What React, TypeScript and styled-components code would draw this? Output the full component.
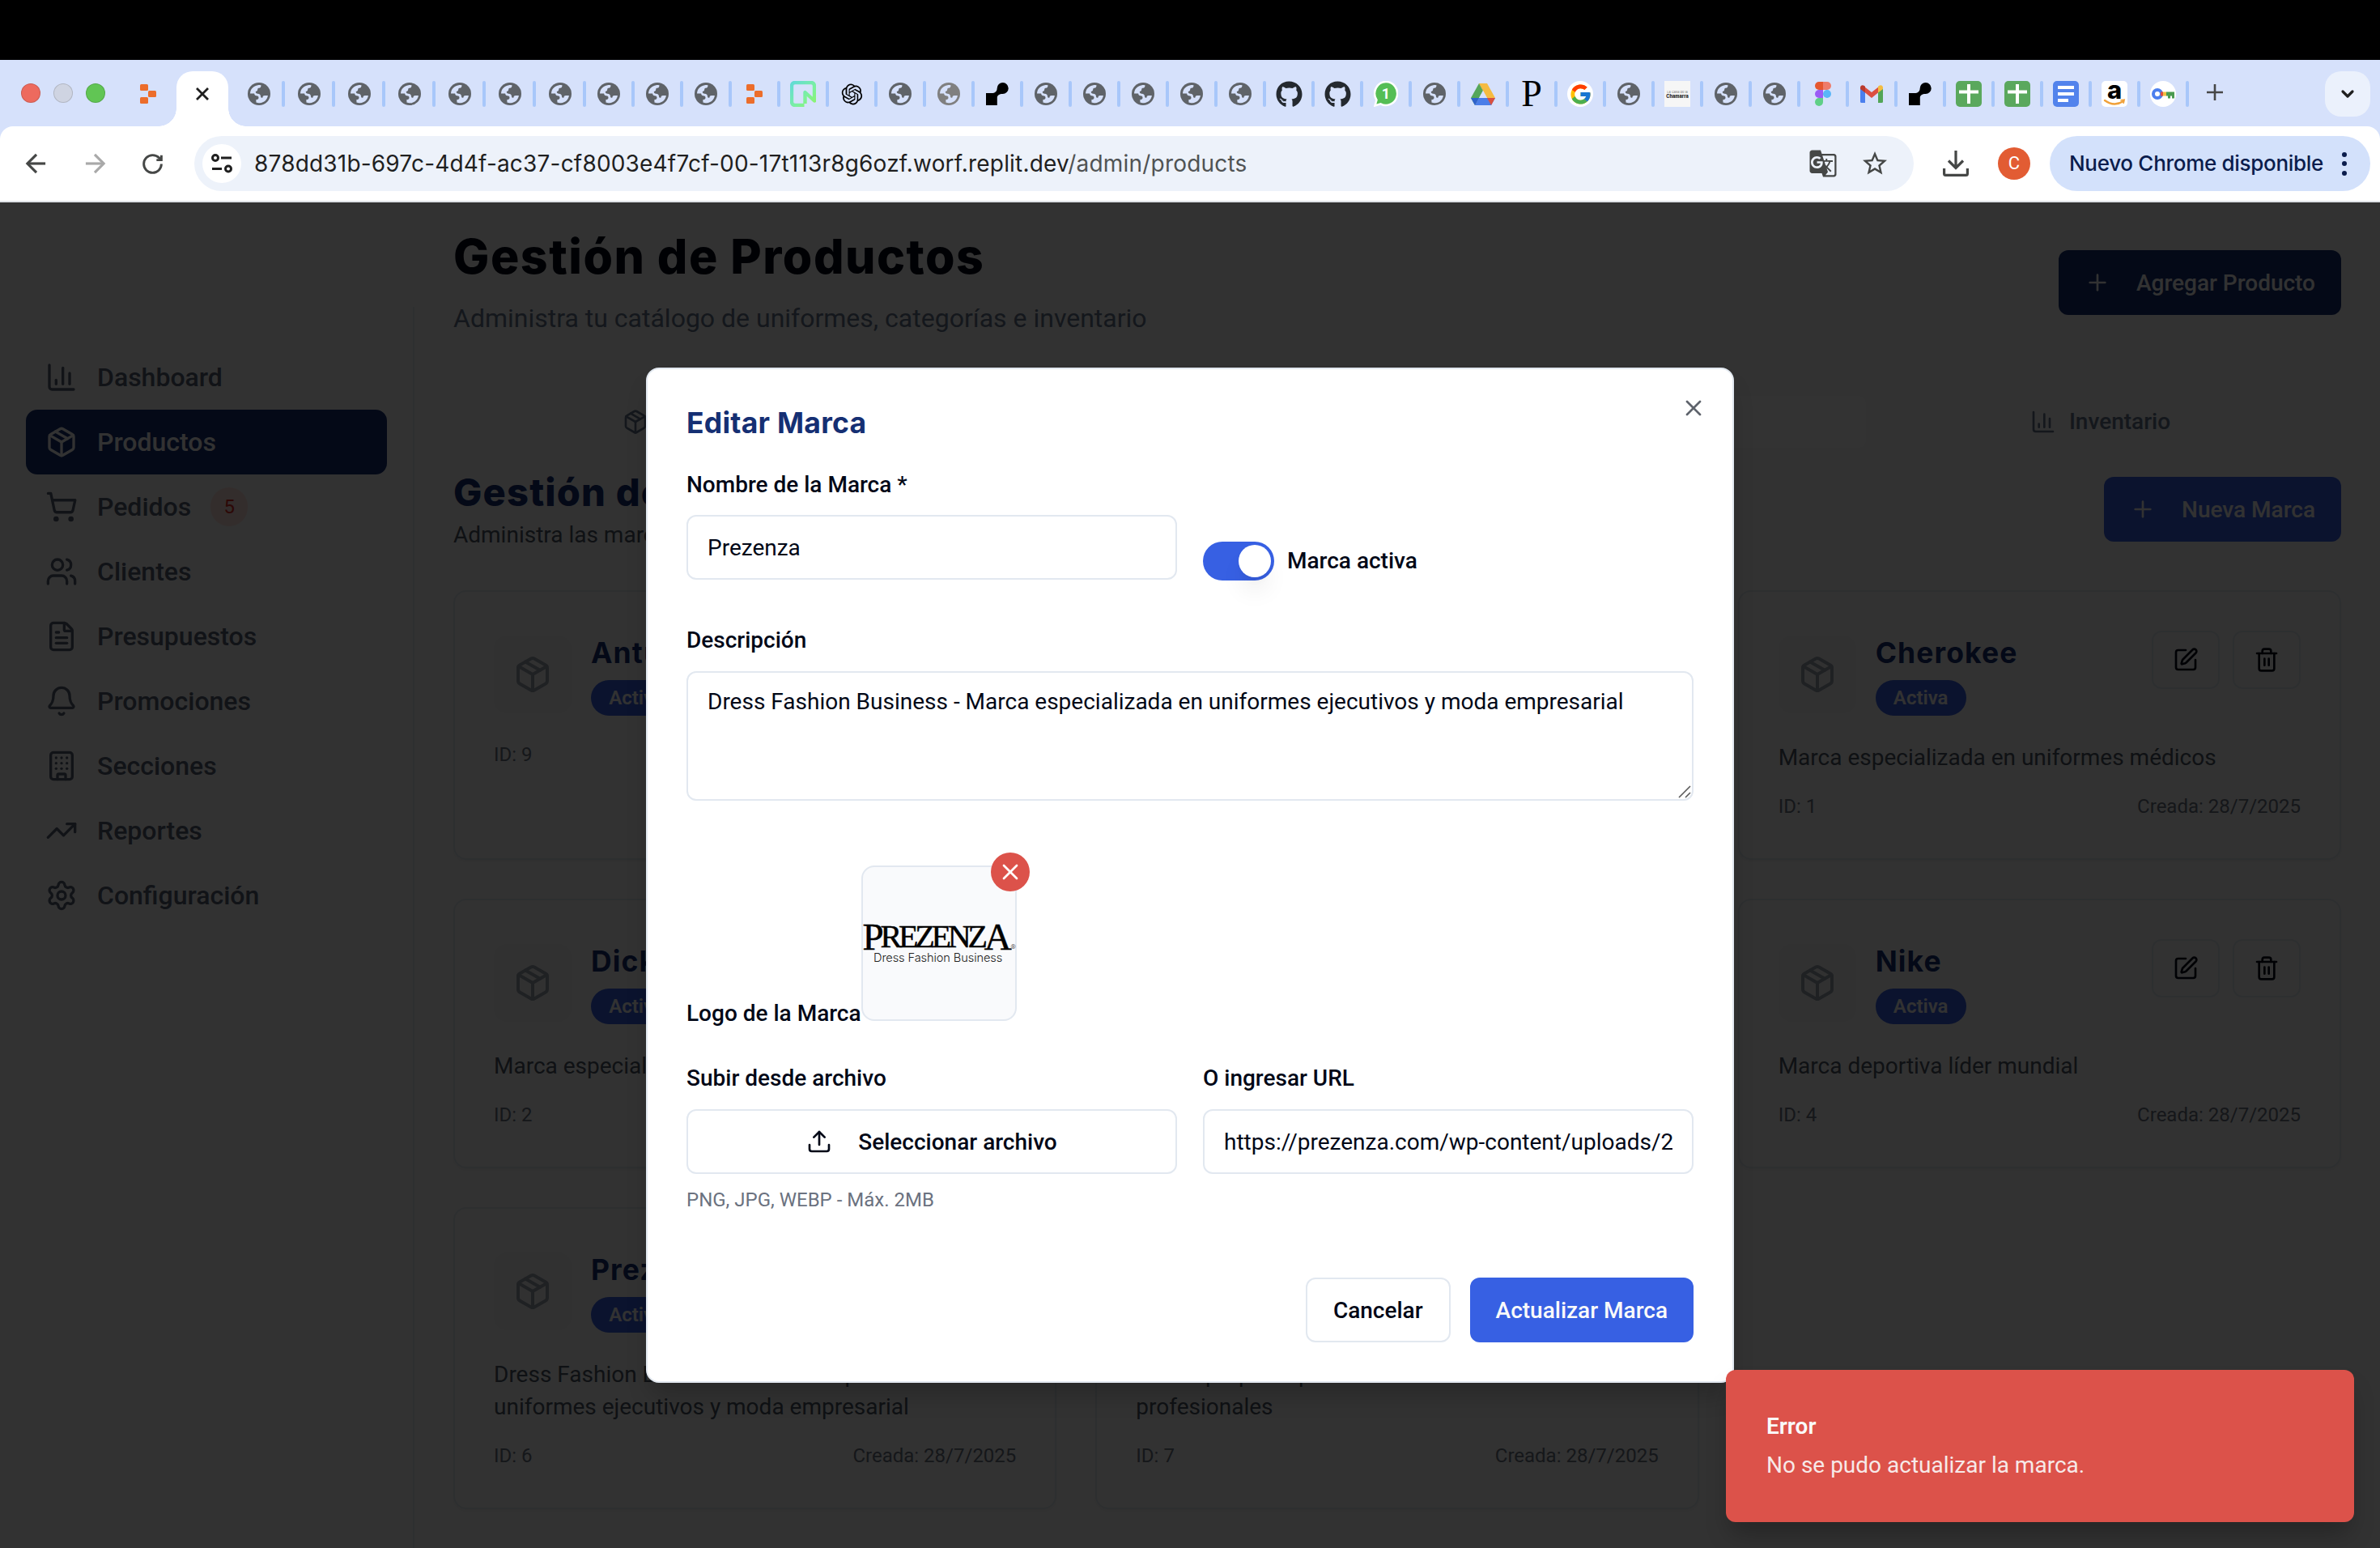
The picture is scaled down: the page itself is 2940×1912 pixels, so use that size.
import React from 'react';
import styled, { createGlobalStyle, css } from 'styled-components';
import {
  ChartColumn, Package, ShoppingCart, Users, FileText, Bell, Building, TrendingUp, Settings,
  Plus, SquarePen, Trash2, X, Upload, RotateCw, ArrowLeft, ArrowRight, ChevronDown,
} from 'lucide-react';
import { FaGithub } from 'react-icons/fa';
import { FcGoogle } from 'react-icons/fc';
import { RiOpenaiFill } from 'react-icons/ri';
import { MdGTranslate, MdStarOutline } from 'react-icons/md';

const body = 'Roboto, "Liberation Sans", sans-serif';
const display = 'Inter, "Open Sans", sans-serif';
const navy = '#152f73';
const blue = '#3760e3';
const ink = '#020817';
const line = '#e2e8f0';

const GlobalStyle = createGlobalStyle`
  * { box-sizing: border-box; }
  body { margin: 0; background: #000; font-family: ${body}; color: ${ink}; }
  h1, h2, h3, p { margin: 0; }
  button, input, textarea { font-family: inherit; margin: 0; }
  svg { display: block; flex: none; }
`;

const Screen = styled.div`
  width: 2940px;
  height: 1912px;
  padding-top: 74px;
  background: #000;
  display: flex;
  flex-direction: column;
  overflow: hidden;
`;

/* ---------- browser chrome ---------- */

const TabStrip = styled.div`
  height: 82px;
  flex: none;
  background: #d6e1fb;
  display: flex;
  align-items: flex-end;
  padding: 0 12px 0 26px;
`;
const Lights = styled.div`
  height: 82px;
  display: flex;
  align-items: center;
  gap: 16px;
  margin-right: 23px;
`;
const Light = styled.i<{ $color: string }>`
  width: 24px;
  height: 24px;
  border-radius: 50%;
  background: ${p => p.$color};
  border: 1px solid rgba(0, 0, 0, 0.14);
`;
const PinnedTab = styled.div`
  width: 60px;
  height: 80px;
  display: grid;
  place-items: center;
`;
const ActiveTab = styled.div`
  position: relative;
  width: 64px;
  height: 68px;
  margin: 0 8px 0 5px;
  padding-bottom: 12px;
  background: #fff;
  border-radius: 20px 20px 0 0;
  display: grid;
  place-items: center;
  color: #1f1f1f;
  &::before, &::after {
    content: '';
    position: absolute;
    bottom: 0;
    width: 22px;
    height: 22px;
  }
  &::before { right: 100%; background: radial-gradient(circle at 0 0, transparent 21.5px, #fff 22px); }
  &::after { left: 100%; background: radial-gradient(circle at 100% 0, transparent 21.5px, #fff 22px); }
`;
const Tab = styled.div<{ $wide?: boolean }>`
  width: ${p => (p.$wide ? 62 : 60)}px;
  height: 80px;
  padding-left: ${p => (p.$wide ? 2 : 0)}px;
  display: flex;
  align-items: center;
`;
const TabIcon = styled.div`
  width: 56px;
  display: grid;
  place-items: center;
`;
const TabDivider = styled.i`
  width: 4px;
  height: 32px;
  border-radius: 2px;
  background: #a8c7fa;
`;
const NewTab = styled.div`
  width: 64px;
  height: 80px;
  padding-bottom: 4px;
  display: grid;
  place-items: center;
  color: #474747;
`;
const TabSearch = styled.div`
  width: 56px;
  height: 56px;
  margin: 0 0 12px auto;
  border-radius: 20px;
  background: #ebf1fc;
  display: grid;
  place-items: center;
  color: #1f1f1f;
`;
const FavTile = styled.div<{ $bg: string; $round?: boolean }>`
  width: 32px;
  height: 32px;
  background: ${p => p.$bg};
  border-radius: ${p => (p.$round ? '50%' : '5px')};
  display: grid;
  place-items: center;
`;
const SerifFav = styled.span`
  font: 46px/32px "Liberation Serif", serif;
  color: #000;
`;
const ChamarraFav = styled.div`
  width: 32px;
  height: 32px;
  background: #f6f6f6;
  display: flex;
  flex-direction: column;
  align-items: center;
  justify-content: center;
  font: 4px/5px ${display};
  color: #777;
  b { font: 800 5.6px/6px ${display}; color: #222; }
`;

const ToolbarBack = styled.div`
  flex: none;
  height: 94px;
  background: #d6e1fb;
`;
const Toolbar = styled.div`
  height: 94px;
  background: #fff;
  border-radius: 16px 16px 0 0;
  border-bottom: 2px solid #dfe2e6;
  display: flex;
  align-items: center;
  padding: 0 12px 0 26px;
`;
const NavIcon = styled.div<{ $dim?: boolean }>`
  width: 36px;
  margin-right: 36px;
  display: grid;
  place-items: center;
  color: ${p => (p.$dim ? '#a9a9a9' : '#454746')};
`;
const Omnibox = styled.div`
  width: 2124px;
  height: 68px;
  margin-left: -2px;
  border-radius: 34px;
  background: #edf2fa;
  display: flex;
  align-items: center;
  padding: 0 30px 0 10px;
`;
const SiteInfo = styled.div`
  width: 48px;
  height: 48px;
  border-radius: 50%;
  background: #fff;
  display: grid;
  place-items: center;
  margin-right: 16px;
`;
const Url = styled.div`
  font: 28px/40px ${display};
  letter-spacing: 0.19px;
  color: #1f1f1f;
  span { color: #505354; }
`;
const OmniActions = styled.div`
  margin-left: auto;
  display: flex;
  align-items: center;
  gap: 28px;
  color: #454746;
`;
const ToolAction = styled.div`
  width: 40px;
  margin-left: 32px;
  display: grid;
  place-items: center;
  color: #454746;
`;
const Avatar = styled.div`
  width: 40px;
  height: 40px;
  margin-left: 32px;
  border-radius: 50%;
  background: #e25c33;
  color: #fff;
  font: 22px/40px ${body};
  text-align: center;
`;
const UpdatePill = styled.div`
  height: 68px;
  width: 396px;
  margin-left: auto;
  padding: 0 29px 0 24px;
  border-radius: 34px;
  background: #d3e1fb;
  display: flex;
  align-items: center;
  justify-content: space-between;
  color: #0a1c4c;
  font: 500 26px/40px ${display};
  letter-spacing: -0.3px;
  white-space: nowrap;
`;
const Dots = styled.div`
  display: flex;
  flex-direction: column;
  gap: 5.5px;
  i { width: 6px; height: 6px; border-radius: 50%; background: #0a1c4c; }
`;

/* ---------- page ---------- */

const Page = styled.div`
  position: relative;
  flex: 1;
  min-height: 0;
  display: flex;
  background: #fafafa;
  overflow: hidden;
`;
const Sidebar = styled.aside`
  width: 512px;
  flex: none;
  margin-top: 129px;
  border-right: 2px solid ${line};
  padding: 47px 32px;
`;
const NavItem = styled.div<{ $active?: boolean }>`
  height: 80px;
  padding: 0 24px;
  border-radius: 14px;
  display: flex;
  align-items: center;
  gap: 24px;
  font: 500 32px/48px ${body};
  color: ${p => (p.$active ? '#fafafa' : '#566074')};
  background: ${p => (p.$active ? navy : 'transparent')};
`;
const Count = styled.span`
  width: 46px;
  height: 48px;
  border-radius: 24px;
  background: #fde0dc;
  color: #e02a1e;
  font: 24px/48px ${body};
  text-align: center;
`;
const Main = styled.main`
  flex: 1;
  min-width: 0;
  padding: 31px 48px;
`;
const SplitRow = styled.div`
  display: flex;
  align-items: center;
  justify-content: space-between;
`;
const PageTitle = styled.h1`
  font: 800 59px/72px ${display};
  letter-spacing: 1.5px;
  color: ${ink};
`;
const PageSubtitle = styled.p`
  margin-top: 16px;
  font: 32px/48px ${body};
  color: #64748b;
`;
const SectionTitle = styled.h2`
  margin-bottom: 2px;
  font: 800 47px/62px ${display};
  letter-spacing: 1.2px;
  color: ${navy};
`;
const SectionText = styled.p`
  font: 28px/40px ${body};
  color: #4b5563;
`;
const PrimaryButton = styled.button<{ $bg: string }>`
  height: 80px;
  padding: 0 32px;
  border: 0;
  border-radius: 12px;
  background: ${p => p.$bg};
  color: #fafafa;
  display: flex;
  align-items: center;
  gap: 32px;
  font-size: 28px;
  font-weight: 500;
`;
const Tabs = styled.div`
  margin: 64px 0 16px;
  height: 80px;
  padding: 8px;
  border-radius: 12px;
  background: #f7f8f9;
  display: grid;
  grid-template-columns: repeat(4, 1fr);
`;
const TabButton = styled.div<{ $active?: boolean }>`
  display: flex;
  align-items: center;
  justify-content: center;
  gap: 16px;
  border-radius: 8px;
  font: 500 28px/40px ${body};
  color: #64748b;
  ${p => p.$active && css`background: #fcfcfc; color: ${ink};`}
`;
const Cards = styled.div`
  margin-top: 48px;
  display: grid;
  grid-template-columns: repeat(3, 1fr);
  gap: 48px;
`;
const Card = styled.article`
  border: 2px solid ${line};
  border-radius: 16px;
  padding: 48px;
  box-shadow: 0 2px 4px rgba(0, 0, 0, 0.05);
`;
const CardHead = styled.div`
  height: 107px;
  display: flex;
  align-items: center;
  margin-bottom: 30px;
`;
const Thumb = styled.div`
  width: 96px;
  height: 96px;
  margin-right: 24px;
  border-radius: 16px;
  background: #f3f4f5;
  color: #9ca3af;
  display: grid;
  place-items: center;
`;
const CardTitle = styled.h3`
  margin-bottom: 6px;
  font: 700 35.5px/55px ${display};
  letter-spacing: 1.1px;
  color: ${navy};
`;
const Pill = styled.span`
  display: block;
  width: 112px;
  height: 44px;
  margin-bottom: 2px;
  border-radius: 22px;
  background: ${blue};
  color: #fafafa;
  font: 600 24px/44px ${body};
  text-align: center;
`;
const CardActions = styled.div`
  margin-left: auto;
  align-self: flex-start;
  display: flex;
  gap: 16px;
`;
const IconButton = styled.button`
  width: 84px;
  height: 72px;
  padding: 0;
  border: 2px solid ${line};
  border-radius: 12px;
  background: transparent;
  color: ${ink};
  display: grid;
  place-items: center;
`;
const CardText = styled.p`
  margin-bottom: 24px;
  font: 28px/40px ${body};
  color: #4b5563;
`;
const CardMeta = styled.div`
  display: flex;
  justify-content: space-between;
  font: 24px/32px ${body};
  color: #6b7280;
`;

/* ---------- dialog ---------- */

const Overlay = styled.div`
  position: absolute;
  inset: 0;
  background: rgba(0, 0, 0, 0.8);
  display: grid;
  place-items: center;
`;
const Dialog = styled.section`
  position: relative;
  width: 1344px;
  height: 1254px;
  padding: 48px;
  border: 2px solid ${line};
  border-radius: 16px;
  background: #fff;
  box-shadow: 0 20px 30px -6px rgba(0, 0, 0, 0.2);
`;
const DialogTitle = styled.h2`
  padding-top: 1px;
  font: 700 35.5px/36px ${display};
  letter-spacing: 0.25px;
  color: ${navy};
`;
const CloseButton = styled.div`
  position: absolute;
  top: 32px;
  right: 32px;
  color: #5e636c;
`;
const FormRow = styled.div<{ $top: number }>`
  margin-top: ${p => p.$top}px;
  display: grid;
  grid-template-columns: 1fr 1fr;
  gap: 32px;
`;
const Field = styled.div<{ $top?: number }>`
  margin-top: ${p => p.$top ?? 0}px;
  display: flex;
  flex-direction: column;
`;
const Label = styled.label`
  font: 500 28px/28px ${body};
  color: ${ink};
  white-space: nowrap;
`;
const inputBox = css`
  margin-top: 24px;
  width: 100%;
  border: 2px solid ${line};
  border-radius: 12px;
  background: #fff;
  color: ${ink};
  font-size: 28px;
  line-height: 40px;
  outline: none;
`;
const Input = styled.input`
  ${inputBox}
  height: 80px;
  padding: 0 24px;
`;
const NameInput = styled(Input)`
  margin-top: 23px;
  padding-top: 1px;
`;
const TextArea = styled.textarea`
  ${inputBox}
  height: 160px;
  padding: 16px 24px;
  resize: none;
`;
const AreaWrap = styled.div`
  position: relative;
  display: flex;
`;
const Grip = styled.svg`
  position: absolute;
  right: 3px;
  bottom: 3px;
`;
const SwitchRow = styled.div`
  align-self: end;
  height: 48px;
  margin-bottom: -1px;
  display: flex;
  align-items: center;
  gap: 16px;
`;
const Switch = styled.div`
  width: 88px;
  height: 48px;
  padding: 4px;
  border-radius: 24px;
  background: ${blue};
  display: flex;
  justify-content: flex-end;
  i {
    width: 40px;
    height: 40px;
    border-radius: 50%;
    background: #fff;
    box-shadow: 0 20px 30px -6px rgba(0, 0, 0, 0.1), 0 8px 12px -8px rgba(0, 0, 0, 0.1);
  }
`;
const LogoRow = styled.div`
  margin-top: 80px;
  display: flex;
  align-items: flex-end;
`;
const LogoBox = styled.div`
  position: relative;
  width: 192px;
  height: 192px;
  margin-bottom: 5px;
  border: 2px solid ${line};
  border-radius: 16px;
  background: #f9fafc;
  display: flex;
  flex-direction: column;
  align-items: center;
  justify-content: center;
  white-space: nowrap;
`;
const Wordmark = styled.div`
  width: 100%;
  height: 35px;
  margin-top: 5px;
  display: flex;
  font: 40px/36px "Liberation Serif", serif;
  letter-spacing: -4.2px;
  color: #000;
  -webkit-text-stroke: 0.5px #000;
  big { font-size: 47px; }
  small { font: 8px/8px ${body}; letter-spacing: 0; align-self: flex-end; color: #555; -webkit-text-stroke: 0; margin-left: 3px; }
`;
const Tagline = styled.div`
  height: 22px;
  padding-right: 2px;
  font: 300 14.6px/19px ${display};
  letter-spacing: -0.1px;
  color: #222;
`;
const RemoveLogo = styled.div`
  position: absolute;
  top: -18px;
  right: -18px;
  width: 48px;
  height: 48px;
  border-radius: 50%;
  background: #dc524a;
  color: #fff;
  display: grid;
  place-items: center;
`;
const OutlineButton = styled.button<{ $top?: number }>`
  height: 80px;
  margin-top: ${p => p.$top ?? 0}px;
  padding: 0 32px;
  border: 2px solid ${line};
  border-radius: 12px;
  background: #fff;
  color: ${ink};
  display: flex;
  align-items: center;
  justify-content: center;
  gap: 32px;
  font-size: 28px;
  font-weight: 500;
`;
const Hint = styled.p`
  margin-top: 16px;
  font: 24px/32px ${body};
  color: #6b7280;
`;
const Footer = styled.div`
  margin-top: 80px;
  display: flex;
  justify-content: flex-end;
  gap: 24px;
`;
const Toast = styled.div`
  position: absolute;
  right: 32px;
  bottom: 32px;
  width: 776px;
  height: 188px;
  padding: 50px;
  border-radius: 12px;
  background: #dc524a;
  box-shadow: 0 20px 30px -6px rgba(0, 0, 0, 0.25);
  color: #fafafa;
  font: 28px/40px ${body};
  b { display: block; font-weight: 600; margin-bottom: 8px; }
  span { opacity: 0.9; }
`;

/* ---------- favicons ---------- */

const Globe = ({ color = '#5f6368' }: { color?: string }) => (
  <svg width="28" height="28" viewBox="0 0 28 28">
    <circle cx="14" cy="14" r="14" fill={color} />
    <path fill="#d6e1fb" d="M3 13.600C3.200 8 7 4 12.600 3.200c1.600-.2 3 0 4 .3-.2 2-1.200 3.300-2.600 3.300-1.200 0-1.800.6-1.800 1.800 0 1.500-1 2.200-2.400 2.400 0 1.800.8 2.800 2.600 2.800 2.400 0 3.600 1.300 3.600 3.200 0 1.600 1.100 2 2.300 1.700.3-1.900 1.200-2.600 2.600-2.600h4c-.6 5-4.800 9-9.900 9.100-2.100 0-3.600-.4-4.600-.8V21c1.900 0 3.100-.7 3.100-2.300 0-1.700-1.200-2.400-2.800-2.400-1.500 0-2.300-1-2.600-2.700z" />
  </svg>
);
const Replit = () => (
  <svg width="20" height="24" viewBox="0 0 20 24" fill="#ec6d2b">
    <rect width="10" height="8" rx="1.5" /><rect x="10" y="8" width="10" height="8" rx="1.5" /><rect y="16" width="10" height="8" rx="1.5" />
  </svg>
);
const Neon = () => (
  <svg width="32" height="32" viewBox="0 0 32 32">
    <defs><linearGradient id="neon" x1="0" y1="0" x2="1" y2="1"><stop offset="0" stopColor="#62dbd6" /><stop offset="0.6" stopColor="#7bf0a0" /><stop offset="1" stopColor="#8df56a" /></linearGradient></defs>
    <path d="M17.500 30H6a4 4 0 0 1-4-4V6a4 4 0 0 1 4-4h20a4 4 0 0 1 4 4v18.500L18.500 14v14" fill="none" stroke="url(#neon)" strokeWidth="4.4" strokeLinejoin="round" />
  </svg>
);
const Keyhole = () => (
  <svg width="28" height="28" viewBox="0 0 28 28"><path d="M0 13h7c4 0 6.500-2 6.700-6A7 7 0 1 1 20.500 14c-4 0-6.700 1.500-6.700 5v9H0z" fill="#000" /></svg>
);
const WhatsApp = () => (
  <svg width="30" height="32" viewBox="0 0 30 32">
    <path d="M15 1a14 14.500 0 1 1-6.500 27.300L1.500 30.500l2-7A14 14.500 0 0 1 15 1z" fill="#55be55" stroke="#fff" strokeWidth="2.5" />
    <text x="15" y="22" textAnchor="middle" fontFamily={body} fontWeight="700" fontSize="18" fill="#fff">1</text>
  </svg>
);
const Drive = () => (
  <svg width="30" height="27" viewBox="0 0 30 27">
    <path d="M10 0h10l-5 9z" fill="#3a8d4b" /><path d="M10 0 0 18l5 9L15 9z" fill="#55a65a" />
    <path d="M20 0H10l10 18h10z" fill="#f5bb41" /><path d="M10 18 5 27h20l5-9z" fill="#4a7de8" />
    <path d="M20 18h10l-5 9z" fill="#d9503f" /><path d="M0 18h10l-5 9z" fill="#2f62cc" /><path d="M10.200 17.800 15 9l4.800 8.800z" fill="#d6e1fb" />
  </svg>
);
const Figma = () => (
  <svg width="20" height="30" viewBox="0 0 20 30">
    <path d="M5 0h5v10H5A5 5 0 0 1 5 0z" fill="#e5572f" /><path d="M10 0h5a5 5 0 0 1 0 10h-5z" fill="#ee7c6b" />
    <path d="M5 10h5v10H5a5 5 0 0 1 0-10z" fill="#9b5cf5" /><circle cx="15" cy="15" r="5" fill="#59b6f8" /><path d="M5 20h5v5a5 5 0 1 1-5-5z" fill="#5fcf87" />
  </svg>
);
const Gmail = () => (
  <svg width="28" height="22" viewBox="0 0 28 22">
    <path d="M0 3v17.500A1.500 1.500 0 0 0 1.500 22H6V8z" fill="#4b7fee" /><path d="M28 3v17.500a1.500 1.500 0 0 1-1.500 1.500H22V8z" fill="#52a557" />
    <path d="M6 2.800 14 9l8-6.200V9.500L14 16 6 9.500z" fill="#dc4f41" /><path d="M0 3.200C0 .5 3-.8 5 1l1 .8v7.700L0 5z" fill="#b93a2f" /><path d="M28 3.200C28 .5 25-.8 23 1l-1 .8v7.700L28 5z" fill="#f3bc42" />
  </svg>
);
const Sheets = () => (
  <FavTile $bg="#5aa85d"><svg width="24" height="24" viewBox="0 0 24 24" fill="#fff"><rect y="7.5" width="24" height="4" /><rect x="10" width="4" height="24" /></svg></FavTile>
);
const Docs = () => (
  <FavTile $bg="#5283ec"><svg width="20" height="20" viewBox="0 0 20 20" fill="#fff"><rect width="20" height="4" /><rect y="8" width="20" height="4" /><rect y="16" width="13" height="4" /></svg></FavTile>
);
const GoogleFav = () => <FavTile $bg="#fff" $round><FcGoogle size={29} /></FavTile>;
const AmazonFav = () => (
  <FavTile $bg="#fff">
    <svg width="32" height="32" viewBox="0 0 32 32" overflow="visible">
      <text x="16" y="22" textAnchor="middle" fontFamily="Inter, sans-serif" fontWeight="800" fontSize="31" fill="#000">a</text>
      <path d="M4 24c7.500 5.500 16 5.500 23 1" fill="none" stroke="#f0a13a" strokeWidth="2.4" strokeLinecap="round" /><path d="M23.500 23.800l4.500-.6-1 4.500" fill="none" stroke="#f0a13a" strokeWidth="1.8" />
    </svg>
  </FavTile>
);
const KeyFav = () => (
  <FavTile $bg="#fff" $round>
    <svg width="28" height="16" viewBox="0 0 28 16">
      <circle cx="7" cy="8" r="5" fill="none" stroke="#4b7fee" strokeWidth="4" />
      <path d="M13 5.500h5v5h-5z" fill="#f3bc42" /><path d="M11 5.500h3v5h-3z" fill="#dc4f41" /><path d="M18 5.500h10v8h-3v-3h-2v3h-3v-3h-2z" fill="#4a9b50" />
    </svg>
  </FavTile>
);
const Chamarra = () => <ChamarraFav><span>La Casa de la</span><b>Chamarra</b></ChamarraFav>;
const Github = () => <FaGithub size={33} color="#24292f" />;
const OpenAI = () => <RiOpenaiFill size={31} color="#000" />;

const g = <Globe />;
const tabIcons = [
  g, g, g, g, g, g, g, g, g, g, <Replit />, <Neon />, <OpenAI />, g, <Globe color="#808080" />, <Keyhole />,
  g, g, g, g, g, <Github />, <Github />, <WhatsApp />, g, <Drive />, <SerifFav>P</SerifFav>, <GoogleFav />, g, <Chamarra />,
  g, g, <Figma />, <Gmail />, <Keyhole />, <Sheets />, <Sheets />, <Docs />, <AmazonFav />, <KeyFav />,
];

function Browser() {
  return (
    <>
      <TabStrip>
        <Lights><Light $color="#ed6a5e" /><Light $color="#cfd4e2" /><Light $color="#61c554" /></Lights>
        <PinnedTab><Replit /></PinnedTab>
        <ActiveTab>
          <svg width="16" height="16" viewBox="0 0 16 16" stroke="currentColor" strokeWidth="2.8"><path d="M1 1l14 14M15 1 1 15" /></svg>
        </ActiveTab>
        {tabIcons.map((icon, i) => (
          <Tab key={i} $wide={i < 7}><TabIcon>{icon}</TabIcon><TabDivider /></Tab>
        ))}
        <NewTab><svg width="20" height="20" viewBox="0 0 20 20" stroke="currentColor" strokeWidth="2.6"><path d="M10 0v20M0 10h20" /></svg></NewTab>
        <TabSearch><ChevronDown size={24} strokeWidth={3.2} /></TabSearch>
      </TabStrip>
      <ToolbarBack>
        <Toolbar>
          <NavIcon><ArrowLeft size={38} strokeWidth={2} strokeLinecap="butt" strokeLinejoin="miter" /></NavIcon>
          <NavIcon $dim><ArrowRight size={38} strokeWidth={2} strokeLinecap="butt" strokeLinejoin="miter" /></NavIcon>
          <NavIcon><RotateCw size={29} strokeWidth={2.4} strokeLinecap="butt" strokeLinejoin="miter" /></NavIcon>
          <Omnibox>
            <SiteInfo>
              <svg width="26" height="24" viewBox="0 0 26 24" fill="none" stroke="#1f1f1f" strokeWidth="3">
                <circle cx="5" cy="5" r="3.5" /><path d="M12 5h13M1 18.500h12" /><circle cx="21" cy="18.5" r="3.5" />
              </svg>
            </SiteInfo>
            <Url>878dd31b-697c-4d4f-ac37-cf8003e4f7cf-00-17t113r8g6ozf.worf.replit.dev<span>/admin/products</span></Url>
            <OmniActions><MdGTranslate size={36} /><MdStarOutline size={36} /></OmniActions>
          </Omnibox>
          <ToolAction>
            <svg width="32" height="32" viewBox="0 0 32 32" fill="none" stroke="currentColor" strokeWidth="3.2"><path d="M16 0v21M7 12.500l9 9 9-9M1.600 22v6.500c0 1 .9 1.900 1.900 1.900h25c1 0 1.900-.9 1.900-1.900V22" /></svg>
          </ToolAction>
          <Avatar>C</Avatar>
          <UpdatePill>Nuevo Chrome disponible<Dots><i /><i /><i /></Dots></UpdatePill>
        </Toolbar>
      </ToolbarBack>
    </>
  );
}

const navItems = [
  { icon: ChartColumn, label: 'Dashboard' },
  { icon: Package, label: 'Productos', active: true },
  { icon: ShoppingCart, label: 'Pedidos', count: 5 },
  { icon: Users, label: 'Clientes' },
  { icon: FileText, label: 'Presupuestos' },
  { icon: Bell, label: 'Promociones' },
  { icon: Building, label: 'Secciones' },
  { icon: TrendingUp, label: 'Reportes' },
  { icon: Settings, label: 'Configuración' },
];

const brands = [
  { id: 9, name: 'Antu' },
  { id: 3, name: 'Barco' },
  { id: 1, name: 'Cherokee', text: 'Marca especializada en uniformes médicos' },
  { id: 2, name: 'Dickies', text: 'Marca especializada en ropa de trabajo' },
  { id: 5, name: 'Grey' },
  { id: 4, name: 'Nike', text: 'Marca deportiva líder mundial' },
  { id: 6, name: 'Prezenza', text: 'Dress Fashion Business - Marca especializada en uniformes ejecutivos y moda empresarial' },
  { id: 7, name: 'Uniformes', text: 'Marca propia especializada en uniformes profesionales' },
];

function BrandCard({ id, name, text }: { id: number; name: string; text?: string }) {
  return (
    <Card>
      <CardHead>
        <Thumb><Package size={48} /></Thumb>
        <div><CardTitle>{name}</CardTitle><Pill>Activa</Pill></div>
        <CardActions>
          <IconButton><SquarePen size={32} /></IconButton>
          <IconButton><Trash2 size={32} /></IconButton>
        </CardActions>
      </CardHead>
      {text && <CardText>{text}</CardText>}
      <CardMeta><span>ID: {id}</span><span>Creada: 28/7/2025</span></CardMeta>
    </Card>
  );
}

function EditBrandDialog() {
  return (
    <Dialog>
      <CloseButton><X size={32} /></CloseButton>
      <DialogTitle>Editar Marca</DialogTitle>
      <FormRow $top={44}>
        <Field><Label>Nombre de la Marca *</Label><NameInput readOnly value="Prezenza" /></Field>
        <SwitchRow><Switch><i /></Switch><Label>Marca activa</Label></SwitchRow>
      </FormRow>
      <Field $top={61}>
        <Label>Descripción</Label>
        <AreaWrap>
          <TextArea readOnly value="Dress Fashion Business - Marca especializada en uniformes ejecutivos y moda empresarial" />
          <Grip width="16" height="16" viewBox="0 0 16 16" stroke="#5a5a5a" strokeWidth="1.6"><path d="M1 15 15 1M9 15l6-6" /></Grip>
        </AreaWrap>
      </Field>
      <LogoRow>
        <Label>Logo de la Marca</Label>
        <LogoBox>
          <Wordmark><big>P</big>REZENZ<big>A</big><small>®</small></Wordmark>
          <Tagline>Dress Fashion Business</Tagline>
          <RemoveLogo><X size={32} /></RemoveLogo>
        </LogoBox>
      </LogoRow>
      <FormRow $top={52}>
        <Field>
          <Label>Subir desde archivo</Label>
          <OutlineButton $top={24}><Upload size={32} />Seleccionar archivo</OutlineButton>
          <Hint>PNG, JPG, WEBP - Máx. 2MB</Hint>
        </Field>
        <Field><Label>O ingresar URL</Label><Input readOnly value="https://prezenza.com/wp-content/uploads/2" /></Field>
      </FormRow>
      <Footer>
        <OutlineButton>Cancelar</OutlineButton>
        <PrimaryButton $bg={blue}>Actualizar Marca</PrimaryButton>
      </Footer>
    </Dialog>
  );
}

export default function App() {
  return (
    <Screen>
      <GlobalStyle />
      <Browser />
      <Page>
        <Sidebar>
          {navItems.map(({ icon: Icon, label, active, count }) => (
            <NavItem key={label} $active={active}>
              <Icon size={40} />{label}{count && <Count>{count}</Count>}
            </NavItem>
          ))}
        </Sidebar>
        <Main>
          <SplitRow>
            <div>
              <PageTitle>Gestión de Productos</PageTitle>
              <PageSubtitle>Administra tu catálogo de uniformes, categorías e inventario</PageSubtitle>
            </div>
            <PrimaryButton $bg={navy}><Plus size={32} />Agregar Producto</PrimaryButton>
          </SplitRow>
          <Tabs>
            <TabButton><Package size={32} />Productos</TabButton>
            <TabButton>Categorías</TabButton>
            <TabButton $active>Marcas</TabButton>
            <TabButton><ChartColumn size={32} />Inventario</TabButton>
          </Tabs>
          <SplitRow>
            <div>
              <SectionTitle>Gestión de Marcas</SectionTitle>
              <SectionText>Administra las marcas de productos</SectionText>
            </div>
            <PrimaryButton $bg={blue}><Plus size={32} />Nueva Marca</PrimaryButton>
          </SplitRow>
          <Cards>{brands.map(b => <BrandCard key={b.id} {...b} />)}</Cards>
        </Main>
        <Overlay><EditBrandDialog /></Overlay>
        <Toast><b>Error</b><span>No se pudo actualizar la marca.</span></Toast>
      </Page>
    </Screen>
  );
}
